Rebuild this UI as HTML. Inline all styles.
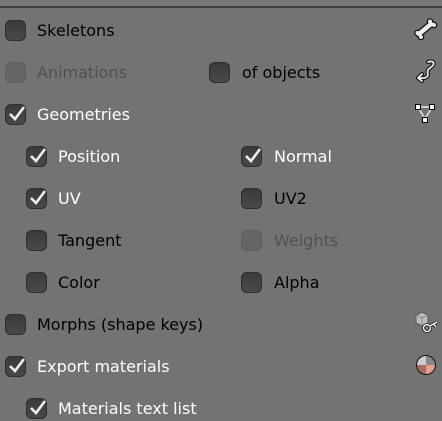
<!DOCTYPE html><html><head><style>
body{margin:0;width:442px;height:421px;background:#737373;position:relative;overflow:hidden;font-family:"DejaVu Sans",sans-serif;font-size:16px;color:#000}
.top{position:absolute;left:0;top:0;width:442px;height:6px;background:#787878;border-bottom:2px solid #404040}
.cb{position:absolute;width:21px;height:21px;border-radius:6px;background:linear-gradient(#3a3a3a,#4a4a4a);box-shadow:inset 0 0 0 1px #2e2e2e}
.cb.d{background:#666;box-shadow:inset 0 0 0 1px #5e5e5e}
.cb svg{position:absolute;left:2px;top:0}
.t{position:absolute;white-space:nowrap;line-height:20px}
.w{color:#fff}.g{color:#505050}
.ic{position:absolute}
</style></head><body>
<div class="top"></div>
<div class="cb" style="left:5px;top:20px"></div><div class="t" style="left:37px;top:21px">Skeletons</div>
<div class="cb d" style="left:5px;top:62px"></div><div class="t g" style="left:37px;top:63px">Animations</div>
<div class="cb" style="left:209px;top:62px"></div><div class="t" style="left:242px;top:63px">of objects</div>
<div class="cb" style="left:5px;top:104px"><svg width="20" height="18"><path d="M3 10 L8 15 L17 3" stroke="#eee" stroke-width="2.6" fill="none"/></svg></div><div class="t w" style="left:37px;top:105px">Geometries</div>
<div class="cb" style="left:26px;top:146px"><svg width="20" height="18"><path d="M3 10 L8 15 L17 3" stroke="#eee" stroke-width="2.6" fill="none"/></svg></div><div class="t w" style="left:58px;top:147px">Position</div>
<div class="cb" style="left:241px;top:146px"><svg width="20" height="18"><path d="M3 10 L8 15 L17 3" stroke="#eee" stroke-width="2.6" fill="none"/></svg></div><div class="t w" style="left:274px;top:147px">Normal</div>
<div class="cb" style="left:26px;top:188px"><svg width="20" height="18"><path d="M3 10 L8 15 L17 3" stroke="#eee" stroke-width="2.6" fill="none"/></svg></div><div class="t w" style="left:58px;top:189px">UV</div>
<div class="cb" style="left:241px;top:188px"></div><div class="t" style="left:274px;top:189px">UV2</div>
<div class="cb" style="left:26px;top:230px"></div><div class="t" style="left:58px;top:231px">Tangent</div>
<div class="cb d" style="left:241px;top:230px"></div><div class="t g" style="left:274px;top:231px">Weights</div>
<div class="cb" style="left:26px;top:272px"></div><div class="t" style="left:58px;top:273px">Color</div>
<div class="cb" style="left:241px;top:272px"></div><div class="t" style="left:274px;top:273px">Alpha</div>
<div class="cb" style="left:5px;top:314px"></div><div class="t" style="left:37px;top:315px">Morphs (shape keys)</div>
<div class="cb" style="left:5px;top:356px"><svg width="20" height="18"><path d="M3 10 L8 15 L17 3" stroke="#eee" stroke-width="2.6" fill="none"/></svg></div><div class="t w" style="left:37px;top:357px">Export materials</div>
<div class="cb" style="left:26px;top:398px"><svg width="20" height="18"><path d="M3 10 L8 15 L17 3" stroke="#eee" stroke-width="2.6" fill="none"/></svg></div><div class="t w" style="left:58px;top:399px">Materials text list</div>
<svg class="ic" style="left:414px;top:18px" width="24" height="24"><path d="M5 16 L17 6" stroke="#111" stroke-width="7" stroke-linecap="round"/><circle cx="3.5" cy="15" r="3.3" fill="#111"/><circle cx="7" cy="19" r="3.3" fill="#111"/><circle cx="16" cy="3.5" r="3.3" fill="#111"/><circle cx="20" cy="7" r="3.3" fill="#111"/><path d="M5 16 L17 6" stroke="#eee" stroke-width="4.5" stroke-linecap="round"/><circle cx="3.5" cy="15" r="2" fill="#eee"/><circle cx="7" cy="19" r="2" fill="#eee"/><circle cx="16" cy="3.5" r="2" fill="#eee"/><circle cx="20" cy="7" r="2" fill="#eee"/></svg>
<svg class="ic" style="left:414px;top:58px" width="24" height="26"><path d="M14 4 C20 2 22 6 16 10 C10 14 18 18 10 20 L5 20 M8 16 L4 20 L8 23" stroke="#111" stroke-width="4" fill="none" stroke-linecap="round" stroke-linejoin="round"/><path d="M14 4 C20 2 22 6 16 10 C10 14 18 18 10 20 L5 20 M8 16 L4 20 L8 23" stroke="#eee" stroke-width="1.8" fill="none" stroke-linecap="round" stroke-linejoin="round"/></svg>
<svg class="ic" style="left:414px;top:102px" width="24" height="24"><path d="M4 5 L18 5 L11 17 Z" stroke="#ccc" stroke-width="2" fill="none"/><rect x="1.5" y="2.5" width="5" height="5" fill="#fff" stroke="#000"/><rect x="15.5" y="2.5" width="5" height="5" fill="#fff" stroke="#000"/><rect x="8.5" y="15.5" width="5" height="5" fill="#fff" stroke="#000"/></svg>
<svg class="ic" style="left:413px;top:310px" width="26" height="26"><path d="M3 5 L9 2 L15 5 L15 13 L9 16 L3 13 Z" fill="#bbb" stroke="#555"/><path d="M3 5 L9 8 L15 5 M9 8 L9 16" stroke="#888" fill="none"/><circle cx="14" cy="18" r="3.5" fill="none" stroke="#111" stroke-width="3"/><circle cx="14" cy="18" r="3.5" fill="none" stroke="#fff" stroke-width="1.4"/><path d="M17 16 L24 12 M21 14 L23 17" stroke="#111" stroke-width="3"/><path d="M17 16 L24 12 M21 14 L23 17" stroke="#fff" stroke-width="1.4"/></svg>
<svg class="ic" style="left:415px;top:354px" width="24" height="24"><circle cx="11" cy="11" r="10" fill="#111"/><path d="M11 2 A9 9 0 0 0 2 11 L11 11 Z" fill="#ccc"/><path d="M11 2 A9 9 0 0 1 20 11 L11 11 Z" fill="#888"/><path d="M2 11 A9 9 0 0 0 11 20 L11 11 Z" fill="#a86d60"/><path d="M20 11 A9 9 0 0 1 11 20 L11 11 Z" fill="#e0a090"/></svg>
</body></html>
